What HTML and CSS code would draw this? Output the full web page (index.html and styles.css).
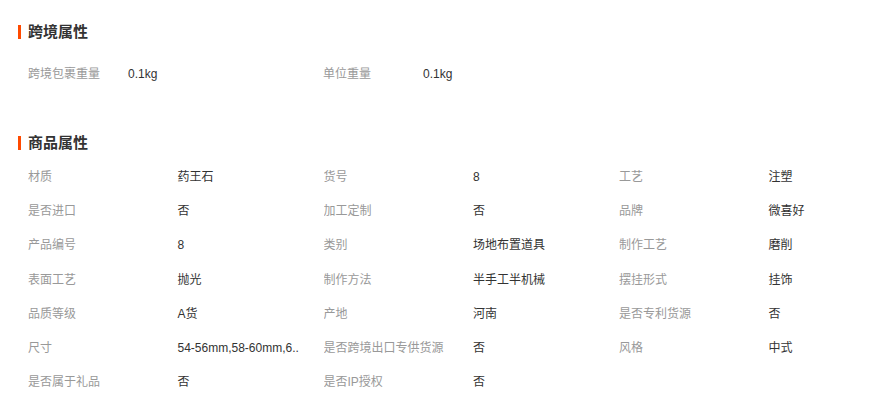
FILE: index.html
```html
<!DOCTYPE html>
<html lang="zh-CN">
<head>
<meta charset="utf-8">
<title>属性</title>
<link rel="stylesheet" href="styles.css">
</head>
<body>
<div class="page">
  <div class="section-title"><span class="bar"></span><span class="title-text">跨境属性</span></div>
  <div class="cross-list">
    <div class="cross-item"><span class="label">跨境包裹重量</span><span class="value">0.1kg</span></div>
    <div class="cross-item"><span class="label">单位重量</span><span class="value">0.1kg</span></div>
  </div>

  <div class="section-title second"><span class="bar"></span><span class="title-text">商品属性</span></div>
  <div class="attr-grid">
    <div class="attr"><span class="label">材质</span><span class="value">药王石</span></div>
    <div class="attr"><span class="label">货号</span><span class="value">8</span></div>
    <div class="attr"><span class="label">工艺</span><span class="value">注塑</span></div>

    <div class="attr"><span class="label">是否进口</span><span class="value">否</span></div>
    <div class="attr"><span class="label">加工定制</span><span class="value">否</span></div>
    <div class="attr"><span class="label">品牌</span><span class="value">微喜好</span></div>

    <div class="attr"><span class="label">产品编号</span><span class="value">8</span></div>
    <div class="attr"><span class="label">类别</span><span class="value">场地布置道具</span></div>
    <div class="attr"><span class="label">制作工艺</span><span class="value">磨削</span></div>

    <div class="attr"><span class="label">表面工艺</span><span class="value">抛光</span></div>
    <div class="attr"><span class="label">制作方法</span><span class="value">半手工半机械</span></div>
    <div class="attr"><span class="label">摆挂形式</span><span class="value">挂饰</span></div>

    <div class="attr"><span class="label">品质等级</span><span class="value">A货</span></div>
    <div class="attr"><span class="label">产地</span><span class="value">河南</span></div>
    <div class="attr"><span class="label">是否专利货源</span><span class="value">否</span></div>

    <div class="attr"><span class="label">尺寸</span><span class="value">54-56mm,58-60mm,6..</span></div>
    <div class="attr"><span class="label">是否跨境出口专供货源</span><span class="value">否</span></div>
    <div class="attr"><span class="label">风格</span><span class="value">中式</span></div>

    <div class="attr"><span class="label">是否属于礼品</span><span class="value">否</span></div>
    <div class="attr"><span class="label">是否IP授权</span><span class="value">否</span></div>
  </div>
</div>
</body>
</html>
```

FILE: styles.css
```css
html, body {
  margin: 0;
  padding: 0;
  background: #ffffff;
}

body {
  font-family: "Liberation Sans", "Noto Sans CJK SC", sans-serif;
  font-size: 12px;
  color: #333333;
}

.page {
  width: 882px;
  padding-top: 20px;
}

.section-title {
  display: flex;
  align-items: center;
  height: 24px;
  padding-left: 18px;
}

.section-title.second {
  margin-top: 40px;
}

.bar {
  display: block;
  width: 3px;
  height: 14px;
  background: #ff4a00;
  margin-right: 7px;
}

.title-text {
  font-size: 15px;
  font-weight: bold;
  color: #333333;
  line-height: 24px;
}

.cross-list {
  display: grid;
  grid-template-columns: 295px 295px;
  padding-left: 28px;
  margin-top: 13px;
}

.cross-item {
  display: flex;
  align-items: center;
  height: 34px;
}

.cross-item .label {
  width: 100px;
  flex: none;
}

.attr-grid {
  display: grid;
  grid-template-columns: 295.5px 295.5px 295.5px;
  grid-auto-rows: 34.17px;
  padding-left: 28px;
  margin-top: 5px;
}

.attr {
  display: flex;
  align-items: center;
  white-space: nowrap;
  overflow: hidden;
}

.attr .label {
  width: 149.5px;
  flex: none;
}

.label {
  display: block;
  line-height: 18px;
  color: #999999;
  white-space: nowrap;
}

.value {
  display: block;
  line-height: 18px;
  color: #333333;
  white-space: nowrap;
}
```
